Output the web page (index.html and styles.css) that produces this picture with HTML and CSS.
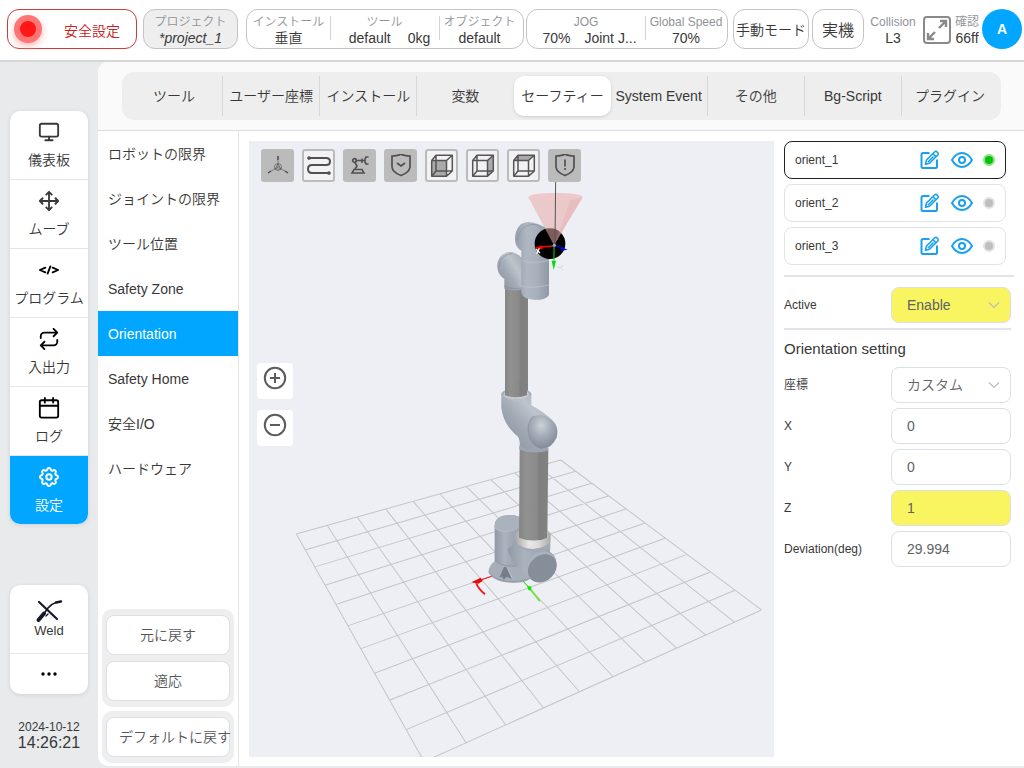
FILE: index.html
```html
<!DOCTYPE html>
<html lang="ja">
<head>
<meta charset="utf-8">
<title>安全設定</title>
<link rel="stylesheet" href="styles.css">
</head>
<body>
<svg class="defs" width="0" height="0" aria-hidden="true">
  <symbol id="edit" viewBox="0 0 20 20"><path d="M9.500 3H3Q1.500 3 1.500 4.500V16.500Q1.500 18 3 18H15.500Q17 18 17 16.500V9.500" fill="none" stroke="currentColor" stroke-width="2"/><path d="M5.500 14.200L6.500 10L14.700 1.800Q16 .8 17.400 2.200T17.800 5L9.500 13.200ZM13 3.800L15.800 6.600M8 12L13.500 6.500" fill="none" stroke="currentColor" stroke-width="1.600" stroke-linejoin="round"/></symbol>
  <symbol id="eye" viewBox="0 0 22 18"><path d="M1 9Q5 2 11 2T21 9Q17 16 11 16T1 9Z" fill="none" stroke="currentColor" stroke-width="2"/><circle cx="11" cy="9" r="3" fill="none" stroke="currentColor" stroke-width="2"/></symbol>
  <symbol id="chevron" viewBox="0 0 12 8"><path d="M1 1.500L6 6.500L11 1.500" fill="none" stroke="currentColor" stroke-width="1.200"/></symbol>
  <symbol id="cube" viewBox="0 0 24 24"><path d="M1.700 6.500H16.500V22.300H1.700ZM1.700 6.500L6 1.300H22.300L16.500 6.500M22.300 1.300V17L16.500 22.300M6 1.300V17H22.300M6 17L1.700 22.300" fill="none" stroke="currentColor" stroke-width="1.500" stroke-linejoin="round"/></symbol>
</svg>

<header class="topbar">
  <button class="safety" type="button"><span class="lamp"></span><span class="safety-text">安全設定</span></button>
  <button class="project pair" type="button"><span class="cap">プロジェクト</span><em class="val">*project_1</em></button>
  <div class="group group-install">
    <div class="pair cell-install"><span class="cap">インストール</span><span class="val">垂直</span></div>
    <div class="pair cell-tool"><span class="cap">ツール</span><span class="val vals"><span>default</span><span>0kg</span></span></div>
    <div class="pair cell-object"><span class="cap">オブジェクト</span><span class="val">default</span></div>
  </div>
  <div class="group group-jog">
    <div class="pair cell-jog"><span class="cap">JOG</span><span class="val vals jog-vals"><span>70%</span><span>Joint J...</span></span></div>
    <div class="pair cell-speed"><span class="cap">Global Speed</span><span class="val">70%</span></div>
  </div>
  <button class="mode" type="button">手動モード</button>
  <button class="real" type="button">実機</button>
  <div class="pair collision"><span class="cap">Collision</span><span class="val">L3</span></div>
  <button class="expand" type="button" aria-label="全画面"><svg width="30" height="30" viewBox="0 0 30 30" fill="none" stroke="#8a8a8a" stroke-width="2"><rect x="2" y="2" width="26" height="26" rx="3"/><path d="M18 6h6v6M24 6l-7 7M6 18v6h6M6 24l7-7" stroke-width="2.400"/></svg></button>
  <div class="pair confirm"><span class="cap">確認</span><span class="val">66ff</span></div>
  <button class="avatar" type="button">A</button>
</header>

<div class="body">
  <aside class="rail">
    <nav class="card">
      <a class="nav" href="#"><svg class="ico" viewBox="0 0 24 24"><rect x="2" y="3" width="20" height="14" rx="2"/><path d="M8 21h8M12 17v4"/></svg><span>儀表板</span></a>
      <a class="nav" href="#"><svg class="ico" viewBox="0 0 24 24"><path d="M5 9l-3 3 3 3M9 5l3-3 3 3M15 19l-3 3-3-3M19 9l3 3-3 3M2 12h20M12 2v20"/></svg><span>ムーブ</span></a>
      <a class="nav" href="#"><svg class="ico dark" viewBox="0 0 24 24"><path d="M8 9.500l-6 2.500 6 2.500M16 9.500l6 2.500-6 2.500M13.500 8l-3 8"/></svg><span>プログラム</span></a>
      <a class="nav" href="#"><svg class="ico dark" viewBox="0 0 24 24"><path d="M17 1l4 4-4 4M3 11V9a4 4 0 0 1 4-4h14M7 23l-4-4 4-4M21 13v2a4 4 0 0 1-4 4H3"/></svg><span>入出力</span></a>
      <a class="nav" href="#"><svg class="ico dark" viewBox="0 0 24 24"><rect x="2" y="3.500" width="20" height="19" rx="2"/><path d="M7.500 1v5M16.500 1v5M2 9.500h20"/></svg><span>ログ</span></a>
      <a class="nav active" href="#"><svg class="ico" viewBox="1 1 22 22"><path d="M10.325 4.317c.426-1.756 2.924-1.756 3.350 0a1.724 1.724 0 0 0 2.573 1.066c1.543-.94 3.310.826 2.370 2.370a1.724 1.724 0 0 0 1.065 2.572c1.756.426 1.756 2.924 0 3.350a1.724 1.724 0 0 0-1.066 2.573c.94 1.543-.826 3.310-2.370 2.370a1.724 1.724 0 0 0-2.572 1.065c-.426 1.756-2.924 1.756-3.350 0a1.724 1.724 0 0 0-2.573-1.066c-1.543.94-3.310-.826-2.370-2.370a1.724 1.724 0 0 0-1.065-2.572c-1.756-.426-1.756-2.924 0-3.350a1.724 1.724 0 0 0 1.066-2.573c-.94-1.543.826-3.310 2.370-2.370c1 .608 2.296.07 2.572-1.065z"/><circle cx="12" cy="12" r="2.700"/></svg><span>設定</span></a>
    </nav>
    <div class="rail-foot">
      <div class="card">
        <a class="weld" href="#"><svg width="28" height="24" viewBox="0 0 28 24" fill="none" stroke="#17172b" stroke-linecap="round"><path d="M4 3L22 20" stroke-width="2.200"/><path d="M3.500 21L9 14.500" stroke-width="4"/><path d="M8 16L13 9Q16 5 21 3.500" stroke-width="1.600"/><path d="M21 3.500L26 2.500" stroke-width="2.400"/><path d="M11 17l2-2" stroke-width="1.300"/></svg><span>Weld</span></a>
        <button class="more" type="button" aria-label="その他の項目"><svg width="18" height="6" viewBox="0 0 18 6"><circle cx="3" cy="3" r="1.700"/><circle cx="9" cy="3" r="1.700"/><circle cx="15" cy="3" r="1.700"/></svg></button>
      </div>
      <div class="clock"><span class="date">2024-10-12</span><span class="time">14:26:21</span></div>
    </div>
  </aside>

  <main class="main">
    <div class="tabs-wrap">
      <nav class="tabs">
        <a href="#">ツール</a><a href="#">ユーザー座標</a><a href="#">インストール</a><a href="#">変数</a><a class="active" href="#">セーフティー</a><a href="#">System Event</a><a href="#">その他</a><a href="#">Bg-Script</a><a href="#">プラグイン</a>
      </nav>
    </div>
    <div class="content">
      <section class="submenu">
        <nav class="sublist">
          <a href="#">ロボットの限界</a><a href="#">ジョイントの限界</a><a href="#">ツール位置</a><a href="#">Safety Zone</a><a class="active" href="#">Orientation</a><a href="#">Safety Home</a><a href="#">安全I/O</a><a href="#">ハードウェア</a>
        </nav>
        <div class="actions">
          <div class="action-box"><button type="button">元に戻す</button><button type="button">適応</button></div>
          <div class="action-box"><button class="long" type="button">デフォルトに戻す</button></div>
        </div>
      </section>

      <section class="stage">
        <svg class="scene" viewBox="249 141 525 616" role="img" aria-label="ロボット">
          <defs>
            <linearGradient id="tube"><stop offset="0" stop-color="#858585"/><stop offset=".25" stop-color="#919190"/><stop offset=".6" stop-color="#8a8a8a"/><stop offset=".7" stop-color="#7f7f7f"/><stop offset="1" stop-color="#828282"/></linearGradient>
            <linearGradient id="body"><stop offset="0" stop-color="#939ca8"/><stop offset=".35" stop-color="#afb8c2"/><stop offset=".65" stop-color="#a7b0bb"/><stop offset="1" stop-color="#8f99a5"/></linearGradient>
            <linearGradient id="arm" x1="0" y1=".7" x2=".8" y2="0"><stop offset="0" stop-color="#8d96a2"/><stop offset=".35" stop-color="#a0a9b4"/><stop offset=".65" stop-color="#bdc4cc"/><stop offset="1" stop-color="#a3acb7"/></linearGradient>
            <linearGradient id="elbow" x1="0" y1="0" x2="1" y2="0"><stop offset="0" stop-color="#8f98a4"/><stop offset=".35" stop-color="#abb3be"/><stop offset=".6" stop-color="#9fa8b4"/><stop offset="1" stop-color="#98a2ae"/></linearGradient>
            <radialGradient id="knob" cx=".45" cy=".3" r=".65"><stop offset="0" stop-color="#ccd3da"/><stop offset=".5" stop-color="#a3acb7"/><stop offset="1" stop-color="#858e9a"/></radialGradient>
            <linearGradient id="ring"><stop offset="0" stop-color="#aaa9a7"/><stop offset=".4" stop-color="#e8e7e5"/><stop offset=".65" stop-color="#dddcda"/><stop offset="1" stop-color="#aaa"/></linearGradient>
          </defs>
          <path class="grid-lines" transform="matrix(.338 0 0 .3333 245 350)" d="M152 552L530 1235M244 527L655 1180M332 502L772 1126M417 478L884 1075M498 455L990 1026M577 432L1090 981M655 410L1186 937M728 390L1278 895M799 370L1364 856M868 350L1449 817M934 330L1528 780M152 552L934 330M180 599L978 364M209 650L1025 400M239 705L1075 438M271 763L1127 477M306 827L1182 520M343 896L1243 565M385 969L1306 614M429 1050L1375 667M477 1139L1449 721M530 1235L1528 780"/>
          <g transform="translate(470 180) scale(.3333)">
            <path d="M105 325H174V646H105Z" fill="url(#tube)"/>
            <path d="M82 262C80 238 96 217 119 216C140 216 150 230 165 240V325Q135 338 103 326V297Q84 285 82 262Z" fill="url(#arm)"/>
            <path d="M103 318Q130 332 165 322" class="seam"/><path d="M88 262C86 240 103 223 126 221" class="seam"/>
            <path d="M135 180C135 146 150 127 175 126Q205 127 237 150V345Q229 360 196 360Q160 358 154 340V212Q137 203 135 180Z" fill="url(#body)"/>
            <path d="M143 182Q147 145 174 136Q198 128 215 143" class="seam"/>
            <path d="M155 242Q190 252 236 242M145 312L155 318Q190 328 238 314" class="seam light"/>
            <circle cx="240" cy="191" r="46"/>
            <path d="M175 52Q180 40 256 39Q335 40 338 52L252 196Z" fill="#e8a9a9" fill-opacity=".55"/>
            <path d="M175 52Q185 63 256 63Q330 63 338 52Q333 40 256 39Q180 40 175 52Z" fill="#eec9cb" fill-opacity=".65"/>
            <path d="M338 52L252 196L302 60Z" fill="#e39d9d" fill-opacity=".25"/>
            <path d="M257 0L255 195" stroke="#555" stroke-width="3"/>
            <path d="M252 198L215 201" stroke="red" stroke-width="4"/><path d="M192 204L216 196L218 208Z" fill="red"/>
            <path d="M254 197L280 204" stroke="#00f" stroke-width="3"/><path d="M293 209L273 201V212Z" fill="#00f"/>
            <path d="M252 200V242" stroke="#0d0" stroke-width="3"/><path d="M251 270L245 242H258Z" fill="#0d0"/>
            <circle cx="253" cy="196" r="5" fill="#8ad"/>
            <path d="M198 207L210 219M208 205L200 221" stroke="#fff" stroke-width="4"/><path d="M264 262H272L279 256M272 262L278 271" fill="none" stroke="#d4d5d8" stroke-width="3"/>
          </g>
          <g transform="translate(460 380) scale(.3333)">
            <path d="M124 41V82C128 124 151 151 174 170Q181 181 179 207Q215 223 261 205L289 175Q298 145 282 126Q255 98 214 76V41Z" fill="url(#arm)"/>
            <ellipse cx="169" cy="43" rx="45" ry="17" fill="#a4adb8"/><ellipse cx="169" cy="44" rx="38" ry="14" fill="#c6cacf"/>
            <path d="M135 0H201V46Q165 58 135 46Z" fill="url(#tube)"/>
            <path d="M124 45Q165 75 213 47" class="seam light"/>
            <path d="M204 149Q204 122 220 109Q248 99 275 119Q298 141 290 172Q276 205 247 207Q206 196 204 149Z" fill="url(#knob)"/>
            <path d="M220 109Q204 122 204 149Q206 196 247 207" class="seam"/>
            <path d="M104 440Q104 405 150 405Q186 405 190 425V590H104Z" fill="url(#elbow)"/>
            <path d="M104 441Q102 406 150 405Q180 405 188 423Q177 452 138 453Q110 453 104 441Z" fill="#a9b2bd"/>
            <path d="M104 441Q110 454 138 454Q174 453 187 427" class="seam light"/>
            <path d="M86 570Q91 551 106 543Q145 566 190 556L225 584Q208 608 160 609Q100 606 86 578Z" fill="#a5aeb9"/>
            <path d="M86 575Q105 605 160 605Q205 604 225 583" class="seam"/>
            <path d="M104 543Q140 566 185 556" class="seam"/>
            <path d="M117 591L130 561H139L155 597L140 590L132 599L126 590Z" fill="#747d88"/>
            <path d="M118 590L131 560M141 561L158 596" class="seam light"/>
            <path d="M166 470C164 492 150 500 142 508Q150 535 178 565L205 592L250 600L288 542Q288 528 270 515V475Z" fill="url(#elbow)"/>
            <path d="M179 205Q220 222 265 204L262 480H177Z" fill="url(#tube)"/>
            <path d="M177 197Q220 220 264 200V212Q215 225 179 209Z" fill="#9ba5b1"/>
            <path d="M177 452L165 464L167 482Q181 507 220 507Q261 504 272 484V461L262 451V473Q223 492 177 473Z" fill="url(#ring)"/>
            <path d="M167 484Q181 508 220 507Q261 504 271 486L271 508Q216 526 169 498Z" fill="#a0a9b4"/>
            <ellipse cx="243" cy="560" rx="50" ry="41" transform="rotate(-42 243 560)" fill="#aab3bd"/>
            <ellipse cx="247" cy="565" rx="47" ry="38" transform="rotate(-42 247 565)" fill="#858e99"/>
            <path d="M95 589L62 600" stroke="red" stroke-width="3"/><path d="M34 607L62 593L68 603L55 611Z" fill="#e60b0b"/><path d="M49 610Q54 626 75 643" fill="none" stroke="#e82020" stroke-width="6"/>
            <path d="M188 602L210 625" stroke="#3bda26" stroke-width="3"/><path d="M201 618L213 619L216 633L205 630Z" fill="#0bea0b"/><path d="M212 629L240 664" stroke="#7ce444" stroke-width="6"/>
          </g>
        </svg>
        <div class="tools">
          <button class="on" type="button" aria-label="座標軸"><svg class="thin" viewBox="0 0 24 24"><path d="M12 2v11M12 13l-10 6M12 13l10 6M12 10l3 5H9Z"/><circle cx="12" cy="13" r="3.500"/><path d="M12 2v4M2 19l3-2M22 19l-3-2" stroke-width="1.500"/></svg></button>
          <button type="button" aria-label="軌跡"><svg viewBox="0 0 24 24" stroke-width="2"><path d="M2 4H19Q23 4 23 7.500T19 11H5Q1 11 1 15T5 19H22" stroke-width="2"/><circle cx="2" cy="4" r="1"/><circle cx="22" cy="19" r="1"/></svg></button>
          <button class="on" type="button" aria-label="ロボット表示"><svg viewBox="0 0 24 24"><path d="M6 15.500H14L16 19H4ZM7 15L9 12L7 8.500M8.500 6.500H14M14 4.500V9M14 6.500H17M20.500 3H18L17 5V8L18 10H20.500" stroke-width="1.600"/><circle cx="6.500" cy="6.500" r="1.800"/></svg></button>
          <button class="on" type="button" aria-label="安全"><svg viewBox="0 0 24 24"><path d="M12 0Q15 2 21 2V13Q20.500 18.500 12 21.500Q3.500 18.500 3 13V2Q9 2 12 0ZM8 9l4 3 4-3"/></svg></button>
          <button type="button" aria-label="正面"><svg viewBox="0 0 24 24"><path d="M2 6.500H16.500V22H2Z" class="face"/><use href="#cube"/></svg></button>
          <button type="button" aria-label="側面"><svg viewBox="0 0 24 24"><path d="M16.500 6.500L22 2V17L16.500 22Z" class="face"/><use href="#cube"/></svg></button>
          <button type="button" aria-label="上面"><svg viewBox="0 0 24 24"><path d="M2 6.500L6 1.500H22L16.500 6.500Z" class="face"/><use href="#cube"/></svg></button>
          <button class="on" type="button" aria-label="警告"><svg viewBox="0 0 24 24"><path d="M12 0Q15 2 21 2V13Q20.500 18.500 12 21.500Q3.500 18.500 3 13V2Q9 2 12 0ZM12 5.500v7M12 14v2"/></svg></button>
        </div>
        <div class="zoom">
          <button type="button" aria-label="拡大"><svg viewBox="0 0 24 24"><circle cx="12" cy="12" r="10.200"/><path d="M7 12h10M12 7v10"/></svg></button>
          <button type="button" aria-label="縮小"><svg viewBox="0 0 24 24"><circle cx="12" cy="12" r="10.200"/><path d="M7 12h10"/></svg></button>
        </div>
      </section>

      <section class="panel">
        <div class="orients">
          <div class="orient selected"><span class="name">orient_1</span><button type="button" aria-label="編集"><svg width="20" height="20"><use href="#edit"/></svg></button><button type="button" aria-label="表示"><svg width="22" height="18"><use href="#eye"/></svg></button><i class="dot"></i></div>
          <div class="orient"><span class="name">orient_2</span><button type="button" aria-label="編集"><svg width="20" height="20"><use href="#edit"/></svg></button><button type="button" aria-label="表示"><svg width="22" height="18"><use href="#eye"/></svg></button><i class="dot"></i></div>
          <div class="orient"><span class="name">orient_3</span><button type="button" aria-label="編集"><svg width="20" height="20"><use href="#edit"/></svg></button><button type="button" aria-label="表示"><svg width="22" height="18"><use href="#eye"/></svg></button><i class="dot"></i></div>
        </div>
        <hr>
        <form class="form">
          <div class="row"><label for="active">Active</label><div class="pick"><select id="active" class="changed"><option>Enable</option></select><svg width="12" height="8"><use href="#chevron"/></svg></div></div>
          <hr>
          <h2>Orientation setting</h2>
          <div class="rows">
            <div class="row"><label for="coord">座標</label><div class="pick"><select id="coord"><option>カスタム</option></select><svg width="12" height="8"><use href="#chevron"/></svg></div></div>
            <div class="row"><label for="x">X</label><input id="x" type="text" value="0"></div>
            <div class="row"><label for="y">Y</label><input id="y" type="text" value="0"></div>
            <div class="row"><label for="z">Z</label><input id="z" class="changed" type="text" value="1"></div>
            <div class="row"><label for="dev">Deviation(deg)</label><input id="dev" type="text" value="29.994"></div>
          </div>
        </form>
      </section>
    </div>
  </main>
</div>
</body>
</html>
```
FILE: styles.css
```css
* { box-sizing: border-box; }
body {
  margin: 0;
  min-height: 100vh;
  display: flex;
  flex-direction: column;
  background: #e9eaec;
  color: #383838;
  font-family: "Liberation Sans", "Noto Sans CJK JP", sans-serif;
  font-size: 14px;
  font-weight: 350;
  line-height: 16px;
}
button, input, select { font: inherit; color: inherit; margin: 0; padding: 0; }
button { border: 0; background: none; white-space: nowrap; }
a { color: inherit; text-decoration: none; }
svg { display: block; flex: none; }
.defs { position: absolute; }
hr { border: 0; height: 2px; margin: 0; background: #e3e4e9; }

.topbar {
  display: flex;
  align-items: center;
  height: 62px;
  padding: 0 4px 2px 7px;
  background: #fff;
  border-bottom: 2px solid #d6d6d8;
}
.topbar > * { flex: none; height: 40px; }
.safety, .project, .group, .mode, .real { border: 1px solid #c4c4c6; border-radius: 12px; background: #fff; }
.topbar .safety {
  display: flex;
  align-items: center;
  width: 130px;
  padding-left: 6px;
  border-color: #cf3a3a;
  color: #c62222;
}
.lamp {
  width: 28px;
  height: 28px;
  border: 6px solid #ff7575;
  border-radius: 50%;
  background: #ff1717;
  box-shadow: 0 3px 7px #ffb5b5;
}
.safety-text { margin-left: 22px; padding-top: 3px; }
.pair { display: flex; flex-direction: column; align-items: center; justify-content: center; padding-top: 2px; white-space: nowrap; }
.cap { font-size: 12px; color: #909399; }
.vals { display: flex; gap: 17px; }
.topbar .jog-vals { gap: 14px; }
.topbar .project { width: 95px; margin-left: 6px; background: #eee; }
.group { display: flex; align-items: center; }
.group .pair + .pair { position: relative; }
.group .pair + .pair::before { content: ""; position: absolute; left: 0; top: 4px; width: 1px; height: 24px; background: #d3d3d5; }
.group-install { width: 278px; margin-left: 8px; }
.cell-install { width: 83px; }
.cell-tool { width: 109px; padding-left: 10px; }
.cell-tool .cap { margin-right: 10px; }
.cell-object { flex: 1; padding-right: 3px; }
.group-jog { width: 202px; margin-left: 2px; }
.cell-jog { width: 118px; padding-left: 7px; }
.cell-jog .cap { margin-right: 7px; }
.cell-speed { flex: 1; }
.topbar .mode { width: 76px; margin-left: 5px; padding-top: 2px; }
.topbar .real { width: 52px; margin-left: 3px; padding-top: 4px; font-size: 16px; }
.collision { width: 58px; }
.expand { display: flex; align-items: center; padding-top: 2px; }
.confirm { width: 30px; margin: 0 auto 0 0; }
.topbar .avatar { width: 40px; border-radius: 50%; background: #00a6ff; color: #fff; font-weight: bold; }

.body { flex: 1; display: flex; }
.rail { width: 98px; flex: none; display: flex; flex-direction: column; justify-content: space-between; padding: 49px 10px 17px; }
.card { background: #fff; border-radius: 10px; overflow: hidden; box-shadow: 0 1px 4px #cfd0d3; }
.nav {
  display: flex;
  flex-direction: column;
  align-items: center;
  gap: 9px;
  height: 69px;
  padding-top: 10px;
  border-bottom: 1px solid #e6e6e8;
  white-space: nowrap;
}
.nav.active { height: 68px; background: #00a6ff; color: #fff; border: 0; }
.ico { width: 22px; height: 22px; fill: none; stroke: currentColor; stroke-width: 2; stroke-linecap: round; stroke-linejoin: round; }
.ico.dark { stroke: #000; }
.weld { display: flex; flex-direction: column; align-items: center; height: 69px; padding-top: 14px; font-size: 13px; border-bottom: 1px solid #e6e6e8; }
.more { display: flex; width: 100%; height: 40px; align-items: center; justify-content: center; }
.clock { display: flex; flex-direction: column; align-items: center; padding-top: 25px; }
.date { font-size: 12px; }
.time { font-size: 16px; }

.main { flex: 1; min-width: 0; display: flex; flex-direction: column; margin-bottom: 2px; background: #fff; border-radius: 10px 0 0 10px; overflow: hidden; }
.tabs-wrap { padding: 10px 23px 10px 24px; background: #fafafa; border-bottom: 1px solid #dcdcde; }
.tabs { display: flex; height: 48px; padding: 4px 2px 4px 4px; background: #eee; border-radius: 12px; }
.tabs a { flex: 1 1 0; display: flex; align-items: center; justify-content: center; white-space: nowrap; border-right: 1px solid #d8d8da; min-width: 0; }
.tabs a:nth-child(4), .tabs a:last-child { border-color: transparent; }
.tabs .active { background: #fff; border: 0; border-radius: 10px; box-shadow: 0 1px 3px #ccc; }

.content { flex: 1; display: flex; min-height: 0; }
.submenu { flex: none; width: 141px; display: flex; flex-direction: column; justify-content: space-between; border-right: 1px solid #e5e5e8; }
.sublist { display: flex; flex-direction: column; }
.sublist a { display: flex; align-items: center; height: 45px; padding-left: 10px; }
.sublist .active { background: #00a6ff; color: #fff; }
.actions { display: flex; flex-direction: column; gap: 4px; padding: 0 4px 3px; }
.action-box { display: flex; flex-direction: column; gap: 6px; padding: 6px 4px; border-radius: 10px; background: #eee; }
.action-box button { height: 40px; border: 1px solid #dcdfe6; border-radius: 8px; background: #fff; color: #55575c; }
.action-box .long { padding-left: 12px; text-align: left; }

.stage { position: relative; flex: 1; min-width: 0; margin: 10px 10px 9px; background: #eeeff4; overflow: hidden; }
.scene { width: 100%; }
.grid-lines { fill: none; stroke: #c5c5c7; stroke-width: 3; }
.seam { fill: none; stroke: #87909c; stroke-width: 2; }
.seam.light { stroke: #c1c8cf; }
.tools { position: absolute; left: 12px; top: 8px; display: flex; gap: 8px; }
.tools button { width: 33px; height: 33px; padding: 2px; border: 2px solid #bbb; border-radius: 3px; background: #f2f2f4; color: #555; }
.tools .on { background: #bbb; }
.tools svg { width: 24px; height: 24px; margin: auto; fill: none; stroke: #505050; stroke-width: 1.7; }
.tools .thin { stroke-width: 0.6; }
.tools .face { fill: #aaa; stroke: none; }
.zoom { position: absolute; left: 8px; top: 222px; display: flex; flex-direction: column; gap: 11px; }
.zoom button { width: 36px; height: 36px; padding: 3px 6px 9px; border-radius: 4px; background: #fff; }
.zoom svg { width: 24px; height: 24px; fill: none; stroke: #5c5c5c; stroke-width: 2; }

.panel { flex: none; width: 240px; padding: 10px 10px 0 0; }
.orients { display: flex; flex-direction: column; gap: 5px; padding-right: 8px; margin-bottom: 10px; }
.orient { display: flex; align-items: center; height: 38px; padding: 0 10px; border: 1px solid #e2e3e6; border-radius: 8px; font-size: 12px; }
.orient.selected { border-color: #222; }
.orient button { color: #1ba0ee; }
.orient button + button { margin-left: 11px; }
.name { flex: 1; }
.dot { width: 12px; height: 12px; margin-left: 10px; border: 2px solid #e2e2e2; border-radius: 50%; background: #bfbfbf; }
.selected .dot { border-color: #8be28b; background: #05c405; }
.form { margin: 10px 3px 0 0; }
.form hr { margin-top: 5px; }
.form h2 { margin: 11px 0 10px; font-size: 15px; font-weight: 400; line-height: 16px; }
.rows { display: flex; flex-direction: column; gap: 5px; }
.row { display: flex; align-items: center; justify-content: space-between; }
.row label { font-size: 12px; }
.row input, .row select { width: 120px; height: 36px; padding: 0 15px; border: 1px solid #dcdfe6; border-radius: 8px; background: #fff; color: #606266; appearance: none; }
.row .changed { background: #f9f560; }
.pick { position: relative; color: #b9bcc2; }
.pick svg { position: absolute; right: 11px; top: 14px; pointer-events: none; }
```
